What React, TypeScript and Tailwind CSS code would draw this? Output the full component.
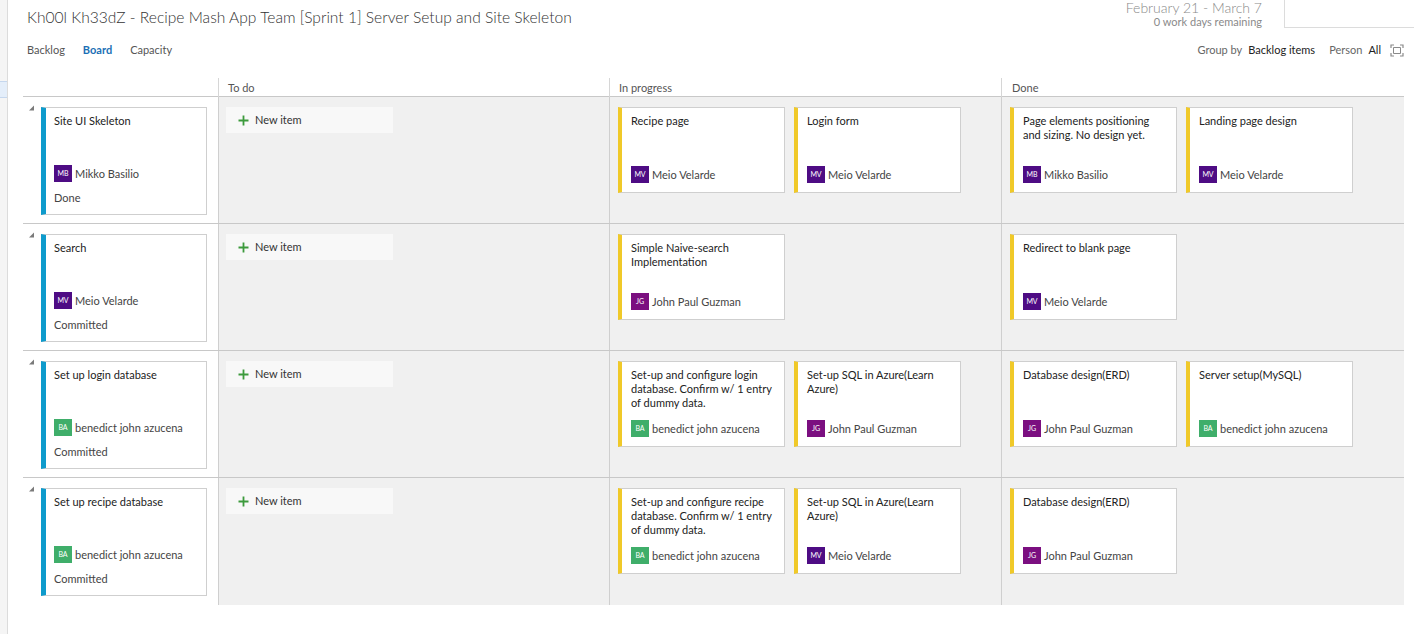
import React from "react";

type Person = { initials: string; name: string; color: string };
type Task = { title: string; who: Person };
type Row = { title: string; who: Person; state: string; progress: Task[]; done: Task[] };

const MB: Person = { initials: "MB", name: "Mikko Basilio", color: "bg-[#4e0c84]" };
const MV: Person = { initials: "MV", name: "Meio Velarde", color: "bg-[#4e0c84]" };
const JG: Person = { initials: "JG", name: "John Paul Guzman", color: "bg-[#7b0f80]" };
const BA: Person = { initials: "BA", name: "benedict john azucena", color: "bg-[#3fae6a]" };

const rows: Row[] = [
  {
    title: "Site UI Skeleton",
    who: MB,
    state: "Done",
    progress: [
      { title: "Recipe page", who: MV },
      { title: "Login form", who: MV },
    ],
    done: [
      { title: "Page elements positioning and sizing. No design yet.", who: MB },
      { title: "Landing page design", who: MV },
    ],
  },
  {
    title: "Search",
    who: MV,
    state: "Committed",
    progress: [{ title: "Simple Naive-search Implementation", who: JG }],
    done: [{ title: "Redirect to blank page", who: MV }],
  },
  {
    title: "Set up login database",
    who: BA,
    state: "Committed",
    progress: [
      { title: "Set-up and configure login database. Confirm w/ 1 entry of dummy data.", who: BA },
      { title: "Set-up SQL in Azure(Learn Azure)", who: JG },
    ],
    done: [
      { title: "Database design(ERD)", who: JG },
      { title: "Server setup(MySQL)", who: BA },
    ],
  },
  {
    title: "Set up recipe database",
    who: BA,
    state: "Committed",
    progress: [
      { title: "Set-up and configure recipe database. Confirm w/ 1 entry of dummy data.", who: BA },
      { title: "Set-up SQL in Azure(Learn Azure)", who: MV },
    ],
    done: [{ title: "Database design(ERD)", who: JG }],
  },
];

function Assignee({ who }: { who: Person }) {
  return (
    <div className="flex items-center gap-[3px] text-[11px] leading-[17px] text-[#444]">
      <span className={`flex h-[17px] w-[18px] items-center justify-center text-[7px] leading-none text-white ${who.color}`}>
        {who.initials}
      </span>
      <span>{who.name}</span>
    </div>
  );
}

function TaskCard({ task }: { task: Task }) {
  return (
    <div className="flex h-[86px] w-[167px] flex-col border border-l-4 border-[#cfcfcf] border-l-[#f0c929] bg-white pt-[6px] pr-[10px] pb-[9px] pl-[9px]">
      <div className="text-[11px] leading-[14px] text-[#222]">{task.title}</div>
      <div className="mt-auto">
        <Assignee who={task.who} />
      </div>
    </div>
  );
}

function TaskCell({ tasks }: { tasks: Task[] }) {
  return (
    <div className="flex gap-[9px] border-l border-[#cfcfcf] bg-[#f0f0f0] pt-[10px] pl-[8px]">
      {tasks.map((t, i) => (
        <TaskCard key={i} task={t} />
      ))}
    </div>
  );
}

export default function App() {
  return (
    <div className="flex h-[634px] w-full bg-white text-[#333]" style={{ fontFamily: "Lato, 'Noto Sans', sans-serif" }}>
      {/* collapsed left pane */}
      <div className="w-[8px] shrink-0 border-r border-[#dcdcdc] bg-[#f5f5f5] pt-[81px]">
        <div className="h-[17px] w-[7px] border-y border-[#c5d7ee] bg-[#e4eefa]" />
      </div>

      <div className="flex min-w-0 flex-1 flex-col pl-[15px] pr-[10px]">
        {/* header */}
        <div className="flex h-[36px] items-start justify-between pl-[4px]">
          <h1 className="pt-[6px] text-[15.6px] leading-[22px] font-light text-[#333]">
            Kh00l Kh33dZ - Recipe Mash App Team [Sprint 1] Server Setup and Site Skeleton
          </h1>
          <div className="mr-[-10px] flex items-start">
            <div className="mr-[22px] text-right text-[#8a8a8a]">
              <div className="text-[14px] leading-[15px] font-light">February 21 - March 7</div>
              <div className="mt-[1px] text-[11px] leading-[12px]">0 work days remaining</div>
            </div>
            <div className="h-[28px] w-[130px] border-b border-l border-[#dcdcdc]" />
          </div>
        </div>

        <div className="flex h-[28px] items-center justify-between pl-[4px] text-[11px]">
          <div className="flex gap-[18px] text-[#555]">
            <span>Backlog</span>
            <span className="font-bold text-[#1b6fb5]">Board</span>
            <span>Capacity</span>
          </div>
          <div className="flex items-center text-[#666]">
            <span>Group by</span>
            <span className="ml-[6px] text-[#222]">Backlog items</span>
            <span className="ml-[14px]">Person</span>
            <span className="ml-[6px] text-[#222]">All</span>
            <svg className="ml-[9px]" width="14" height="13" viewBox="0 0 14 13" fill="none" stroke="#8a8a8a" strokeWidth="1.2">
              <path d="M1 4V1h3M10 1h3v3M13 9v3h-3M4 12H1V9" />
              <path d="M3.5 3.5h7v6h-7z" strokeWidth="1" />
            </svg>
          </div>
        </div>

        {/* board */}
        <div className="mt-[14px]">
          <div className="grid h-[19px] grid-cols-[195px_391px_392px_1fr] border-b border-[#c8c8c8] text-[11px] leading-[20px] text-[#555]">
            <div />
            <div className="border-l border-[#d6d6d6] pl-[9px]">To do</div>
            <div className="border-l border-[#d6d6d6] pl-[9px]">In progress</div>
            <div className="border-l border-[#d6d6d6] pl-[10px]">Done</div>
          </div>

          {rows.map((row, i) => (
            <div
              key={i}
              className={`grid h-[127px] grid-cols-[195px_391px_392px_1fr] ${i < rows.length - 1 ? "border-b border-[#c8c8c8]" : ""}`}
            >
              <div className="flex items-start bg-white pt-[10px]">
                <svg className="mt-[-3px] ml-[5px]" width="13" height="8" viewBox="0 0 13 8">
                  <path d="M1 6.5L6 1.5V6.5Z" fill="#7a7a7a" />
                </svg>
                <div className="flex h-[108px] w-[166px] flex-col border border-l-[5px] border-[#cfcfcf] border-l-[#0e9bcc] bg-white pt-[6px] pl-[8px] pb-[9px]">
                  <div className="text-[11px] leading-[14px] text-[#222]">{row.title}</div>
                  <div className="mt-auto">
                    <Assignee who={row.who} />
                  </div>
                  <div className="mt-[9px] text-[11px] leading-[14px] text-[#444]">{row.state}</div>
                </div>
              </div>
              <div className="border-l border-[#cfcfcf] bg-[#f0f0f0] pt-[10px] pl-[7px]">
                <div className="flex h-[26px] w-[167px] items-center bg-[#f8f8f8] pl-[12px] text-[11px] text-[#333]">
                  <svg className="mr-[6px]" width="11" height="11" viewBox="0 0 11 11" stroke="#3c9a3c" strokeWidth="1.8">
                    <path d="M5.5 0.5v10M0.5 5.5h10" />
                  </svg>
                  New item
                </div>
              </div>
              <TaskCell tasks={row.progress} />
              <TaskCell tasks={row.done} />
            </div>
          ))}
        </div>
      </div>
    </div>
  );
}
